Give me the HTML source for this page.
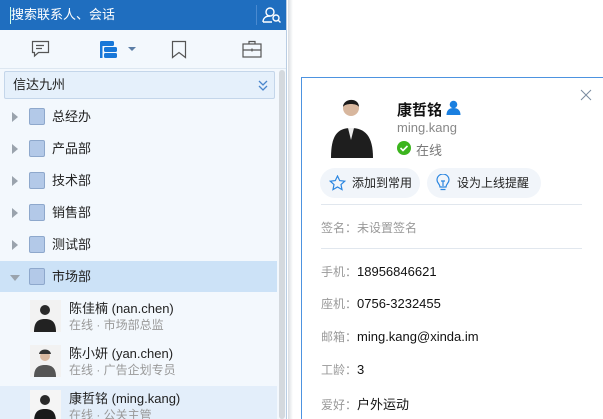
<!DOCTYPE html>
<html><head><meta charset="utf-8"><style>
*{margin:0;padding:0;box-sizing:border-box}
html,body{width:603px;height:419px;overflow:hidden}
body{background:#fff;font-family:"Liberation Sans","Noto Sans CJK SC",sans-serif;font-size:12px;color:#222;position:relative}
.left{position:absolute;left:0;top:0;width:287px;height:419px;background:#f3f8fd;border-right:1px solid #b9cde3}
.shadow{position:absolute;left:288px;top:0;width:5px;height:419px;background:linear-gradient(90deg,#d8dde2,#fff)}
.hdr{height:30px;background:#1f6ebf;color:#fff;font-size:13px;line-height:30px;padding-left:11px;position:relative}
.hdr .cur{position:absolute;left:10px;top:7px;width:1px;height:17px;background:#cfe}
.hdr .sep{position:absolute;left:256px;top:5px;width:1px;height:20px;background:#4a8ad0}
.tabs{height:39px;position:relative;border-bottom:1px solid #dde7f1}
.dd{position:absolute;left:4px;top:71px;width:271px;height:28px;background:#e5f0fb;border:1px solid #c4d6ea;border-radius:2px;line-height:26px;padding-left:8px;font-size:13px}
.sb{position:absolute;left:279px;top:70px;width:6px;height:349px;background:#d4d9de;border-radius:3px}
.row{position:absolute;left:0;width:277px;height:31px;line-height:31px;font-size:13px}
.row .tri{position:absolute;left:12px;top:11px;width:0;height:0;border-top:5px solid transparent;border-bottom:5px solid transparent;border-left:6px solid #9aa3ad}
.row .fold{position:absolute;left:29px;top:7px;width:16px;height:17px;background:#b3c9e8;border:1px solid #8ea8cc;border-radius:2px}
.row span{position:absolute;left:52px}
.mem{position:absolute;left:0;width:277px;height:46px}
.mem .av{position:absolute;left:30px;top:4px;width:31px;height:32px;background:#eee;overflow:hidden}
.mem .n{position:absolute;left:69px;top:2px;font-size:13px}
.mem .s{position:absolute;left:69px;top:20px;font-size:12px;color:#999}
.card{position:absolute;left:301px;top:77px;width:305px;height:342px;border:1px solid #4d93e0;border-bottom:0;background:#fff}
.lbl{position:absolute;left:321px;font-size:12px;color:#999}
.lbl b{font-weight:normal;color:#111;font-size:13px}
.btn{position:absolute;top:168px;height:30px;background:#f1f5fa;border-radius:15px;line-height:30px;font-size:12px;color:#222}
.hr{position:absolute;left:321px;width:261px;height:1px;background:#e1e7ee}
</style></head><body>
<div class="left">
 <div class="hdr">搜索联系人、会话<div class="cur"></div><div class="sep"></div>
  <svg style="position:absolute;left:262px;top:6px" width="20" height="18" viewBox="0 0 20 18" fill="none" stroke="#fff" stroke-width="1.4"><circle cx="8" cy="6" r="4"/><path d="M1 16c0-4 3-6 7-6"/><circle cx="14" cy="12" r="3"/><path d="M16 14l2.5 2.5M1 16h9"/></svg>
 </div>
 <div class="tabs">
  <svg style="position:absolute;left:31px;top:10px" width="19" height="18" viewBox="0 0 19 18" fill="none" stroke="#555" stroke-width="1.2"><path d="M1.5 1.5h16v11h-10l-4 3.5v-3.5h-2z"/><path d="M5 5.5h8M5 8.5h6"/></svg>
  <svg style="position:absolute;left:99px;top:10px" width="20" height="19" viewBox="0 0 20 19"><rect x="1" y="1" width="14" height="5" rx="1.5" fill="#1877d8"/><rect x="5" y="7" width="13" height="5" rx="1.5" fill="#1877d8"/><rect x="5" y="13" width="13" height="5" rx="1.5" fill="#1877d8"/><rect x="1" y="4" width="2.5" height="14" fill="#1877d8"/></svg>
  <div style="position:absolute;left:128px;top:17px;border-left:4px solid transparent;border-right:4px solid transparent;border-top:4px solid #5b7da6"></div>
  <svg style="position:absolute;left:171px;top:10px" width="16" height="19" viewBox="0 0 16 19" fill="none" stroke="#555" stroke-width="1.2"><path d="M1.5 1.5h13v16l-6.5-5-6.5 5z"/></svg>
  <svg style="position:absolute;left:242px;top:10px" width="20" height="18" viewBox="0 0 20 18" fill="none" stroke="#555" stroke-width="1.2"><rect x="1" y="4" width="18" height="13"/><path d="M7 4V1.5h6V4M1 10h18M10 8.5v3"/></svg>
 </div>
 <div class="dd">信达九州<svg style="position:absolute;right:6px;top:8px" width="10" height="11" viewBox="0 0 10 11" fill="none" stroke="#4a86cc" stroke-width="1.3"><path d="M1 1l4 4 4-4M1 6l4 4 4-4"/></svg></div>
 <div class="sb"></div>
 <div class="row" style="top:101px"><div class="tri"></div><div class="fold"></div><span>总经办</span></div>
 <div class="row" style="top:133px"><div class="tri"></div><div class="fold"></div><span>产品部</span></div>
 <div class="row" style="top:165px"><div class="tri"></div><div class="fold"></div><span>技术部</span></div>
 <div class="row" style="top:197px"><div class="tri"></div><div class="fold"></div><span>销售部</span></div>
 <div class="row" style="top:229px"><div class="tri"></div><div class="fold"></div><span>测试部</span></div>
 <div class="row" style="top:261px;background:#cce2f7"><div class="tri" style="left:10px;top:14px;border-left:5px solid transparent;border-right:5px solid transparent;border-top:6px solid #9aa3ad;border-bottom:0"></div><div class="fold"></div><span>市场部</span></div>
 <div class="mem" style="top:296px"><div class="av"><svg width="31" height="32"><rect width="31" height="32" fill="#f2f2f2"/><circle cx="15" cy="10" r="5" fill="#2a2a2a"/><path d="M4 32c0-10 4-13 11-13s11 3 11 13z" fill="#222"/></svg></div><div class="n">陈佳楠 (nan.chen)</div><div class="s">在线 · 市场部总监</div></div>
 <div class="mem" style="top:341px"><div class="av"><svg width="31" height="32"><rect width="31" height="32" fill="#f2f2f2"/><circle cx="15" cy="11" r="5" fill="#d9b8a0"/><path d="M9 9c1-6 11-6 12 0" fill="#333"/><path d="M4 32c0-9 4-12 11-12s11 3 11 12z" fill="#555"/></svg></div><div class="n">陈小妍 (yan.chen)</div><div class="s">在线 · 广告企划专员</div></div>
 <div class="mem" style="top:386px;background:#e3eefa"><div class="av"><svg width="31" height="32"><rect width="31" height="32" fill="#f5f5f5"/><circle cx="15" cy="10" r="5" fill="#2a2a2a"/><path d="M4 32c0-10 4-13 11-13s11 3 11 13z" fill="#1a1a1a"/></svg></div><div class="n">康哲铭 (ming.kang)</div><div class="s">在线 · 公关主管</div></div>
</div>
<div class="shadow"></div>
<div class="card"></div>
<svg style="position:absolute;left:580px;top:89px" width="12" height="12" viewBox="0 0 12 12" stroke="#7a8ba0" stroke-width="1"><path d="M1 1l10 10M11 1L1 11"/></svg>
<svg style="position:absolute;left:330px;top:95px" width="44" height="63" viewBox="0 0 44 63"><rect width="44" height="63" fill="#fff"/><circle cx="21" cy="13" r="8" fill="#d8b79e"/><path d="M13 12c0-9 16-10 16 0c-2-4-14-4-16 0z" fill="#1a1a1a"/><path d="M1 63c0-22 6-30 20-30s22 8 22 30z" fill="#1e1e1e"/><path d="M18 33h6l-3 12z" fill="#eee"/></svg>
<div style="position:absolute;left:397px;top:99px;font-size:15px;font-weight:bold;color:#111">康哲铭</div>
<svg style="position:absolute;left:446px;top:100px" width="15" height="15" viewBox="0 0 15 15" fill="#1a7fe0"><circle cx="7.5" cy="4.5" r="3.8"/><path d="M0.5 15c0-5 3-7 7-7s7 2 7 7z"/></svg>
<div style="position:absolute;left:397px;top:120px;font-size:13px;color:#888">ming.kang</div>
<svg style="position:absolute;left:397px;top:141px" width="14" height="14" viewBox="0 0 14 14"><circle cx="7" cy="7" r="7" fill="#3cb41e"/><path d="M3.5 7l2.5 2.5 4.5-4.5" stroke="#fff" stroke-width="1.6" fill="none"/></svg>
<div style="position:absolute;left:416px;top:140px;font-size:13px;color:#777">在线</div>
<div class="btn" style="left:320px;width:100px"><svg style="position:absolute;left:9px;top:7px" width="17" height="16" viewBox="0 0 17 16" fill="none" stroke="#2b86e0" stroke-width="1.2"><path d="M8.5 1l2.2 4.6 5 .6-3.7 3.4 1 5L8.5 12 4 14.6l1-5L1.3 6.2l5-.6z"/></svg><span style="position:absolute;left:32px">添加到常用</span></div>
<div class="btn" style="left:427px;width:114px"><svg style="position:absolute;left:9px;top:6px" width="14" height="18" viewBox="0 0 14 18" fill="none" stroke="#2b86e0" stroke-width="1.2"><path d="M4 13c0-3-3-4-3-7a6 6 0 0112 0c0 3-3 4-3 7zM4.5 15.5h5M5 7h4M7 7v5"/></svg><span style="position:absolute;left:30px">设为上线提醒</span></div>
<div class="hr" style="top:204px"></div>
<div class="lbl" style="top:219px">签名：未设置签名</div>
<div class="hr" style="top:248px"></div>
<div class="lbl" style="top:263px">手机：<b>18956846621</b></div>
<div class="lbl" style="top:295px">座机：<b>0756-3232455</b></div>
<div class="lbl" style="top:328px">邮箱：<b>ming.kang@xinda.im</b></div>
<div class="lbl" style="top:361px">工龄：<b>3</b></div>
<div class="lbl" style="top:394px">爱好：<b>户外运动</b></div>
</body></html>
